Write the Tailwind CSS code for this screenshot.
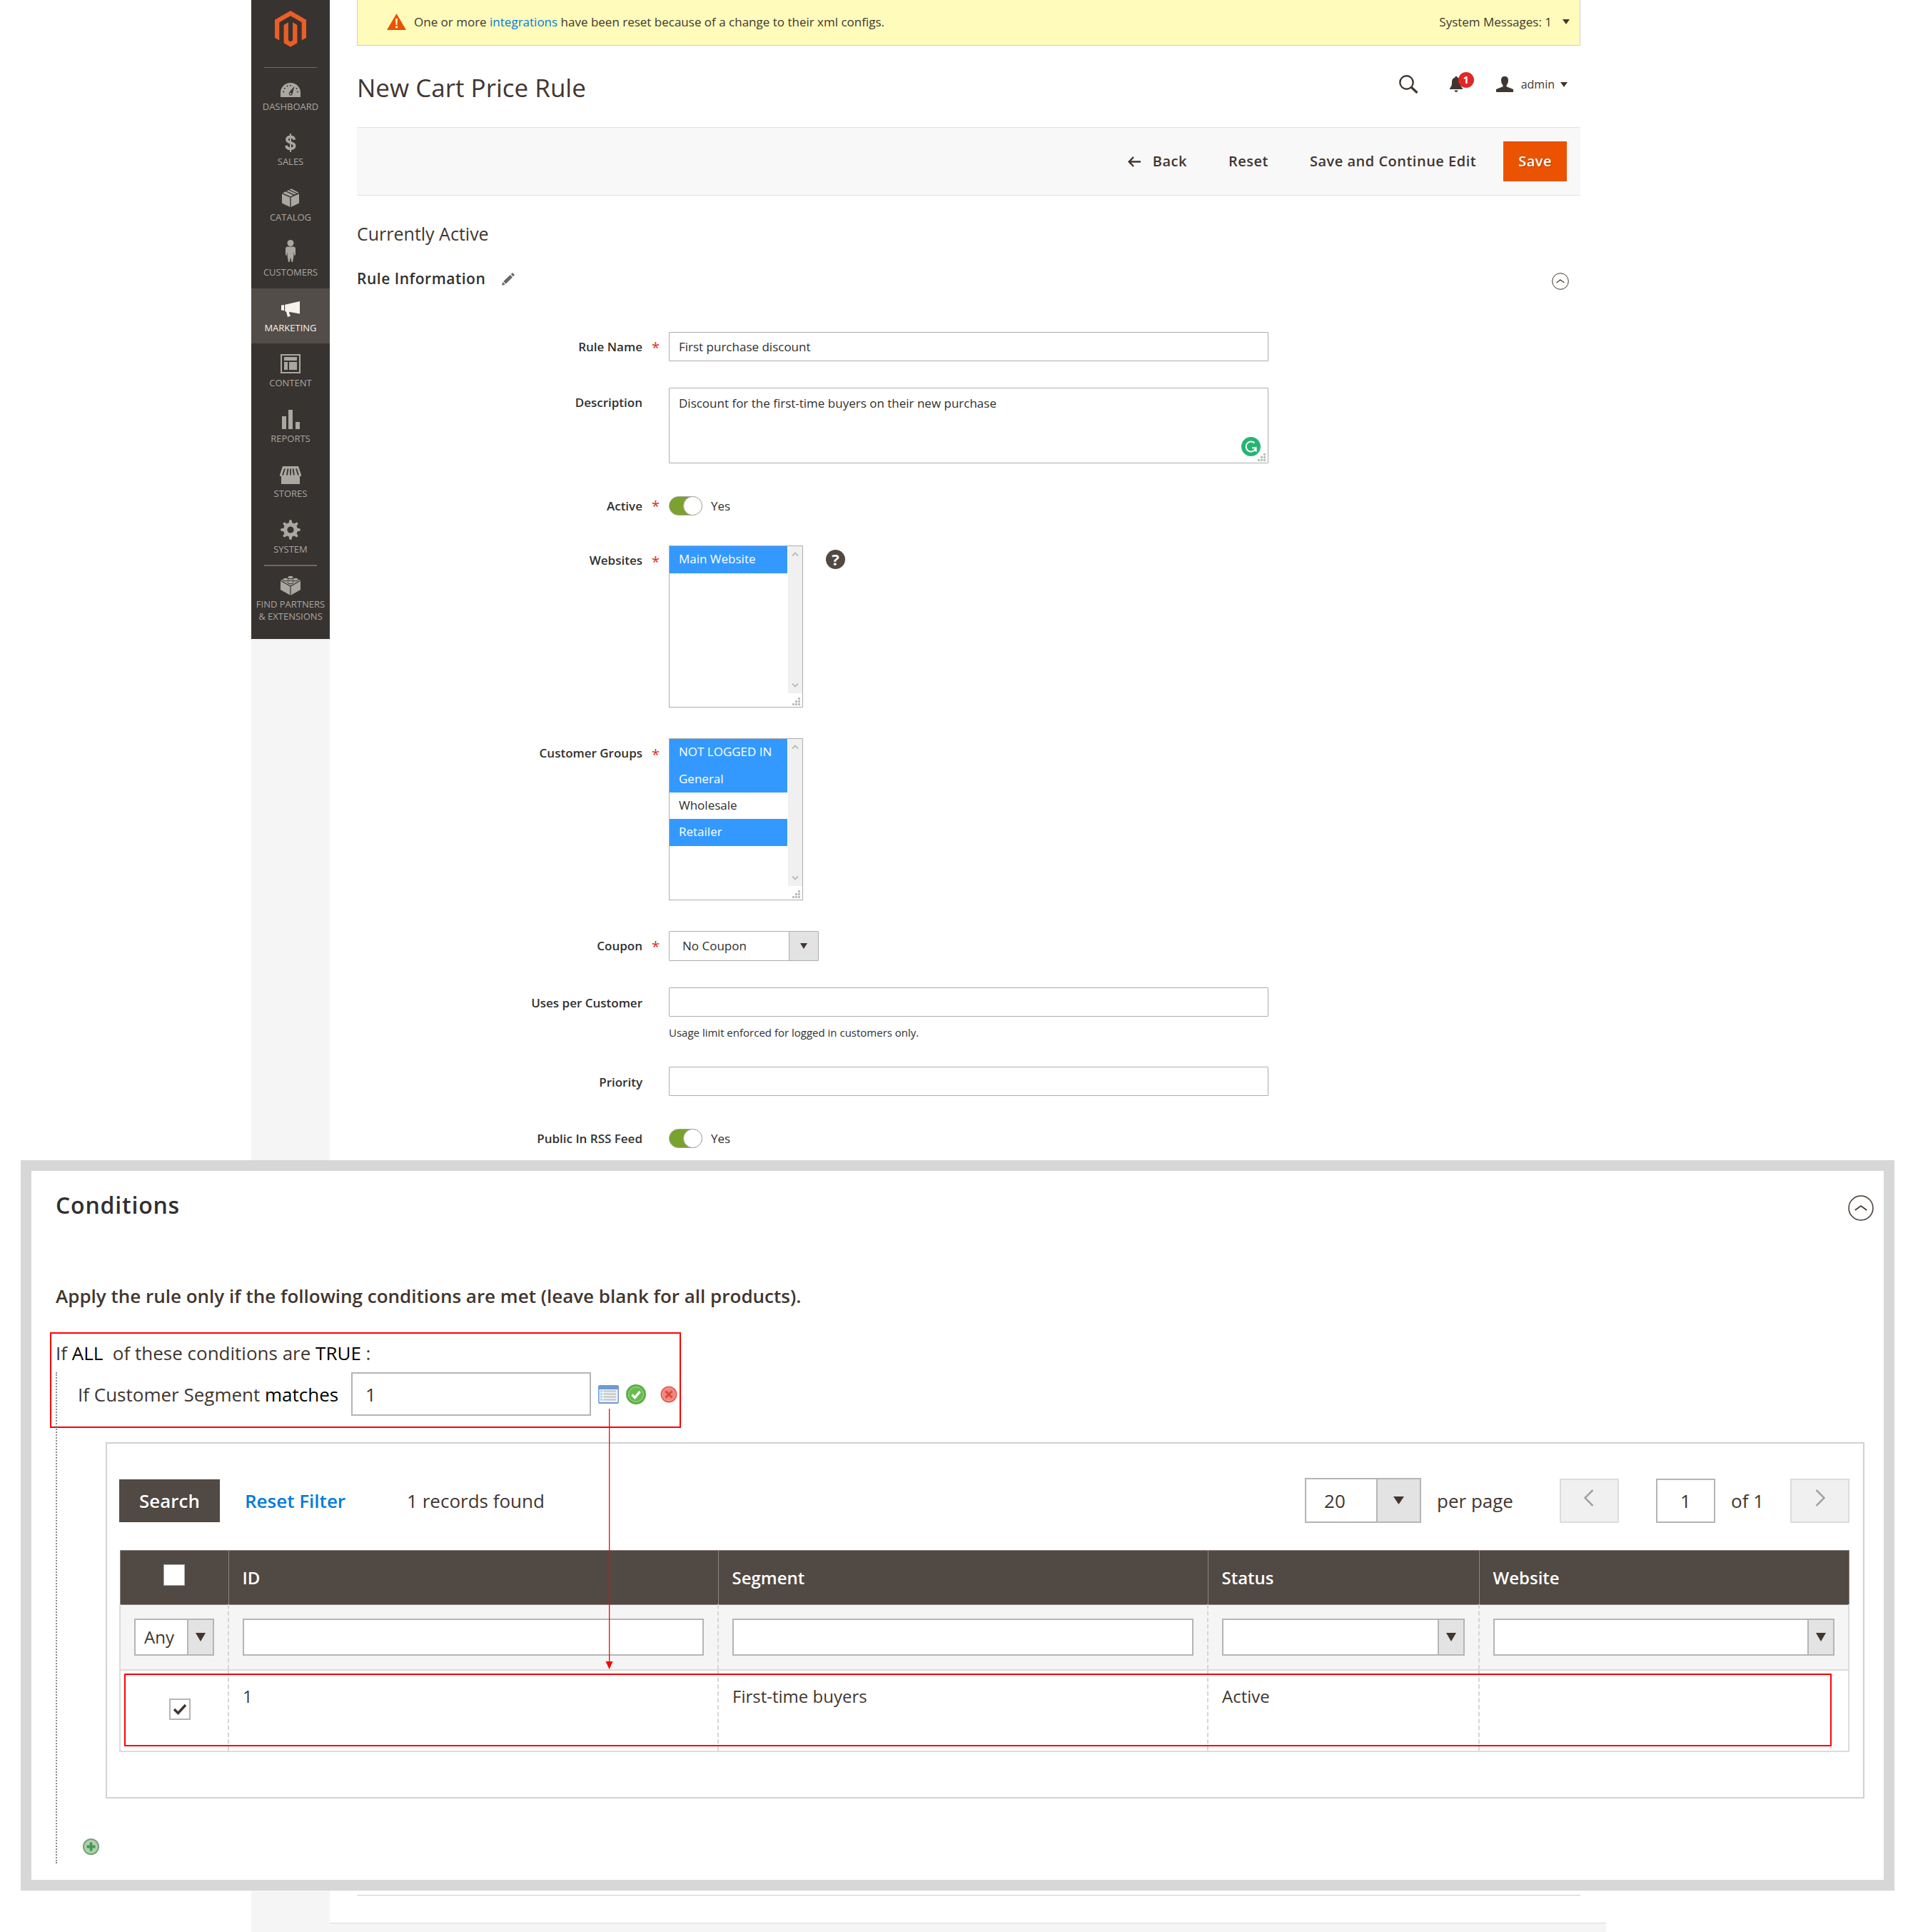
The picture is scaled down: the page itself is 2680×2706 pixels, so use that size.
<!DOCTYPE html>
<html lang="en">
<head>
<meta charset="utf-8">
<title>New Cart Price Rule</title>
<script src="https://cdn.jsdelivr.net/npm/@tailwindcss/browser@4"></script>
</head>
<body class="flex min-h-screen flex-col bg-white font-['Open_Sans',sans-serif] text-[17px] text-[#41362f]">

<svg class="hidden" aria-hidden="true">
  <symbol id="grip" viewBox="0 0 11 11"><path fill="#bdbdbd" d="M8 0h3v3H8zM4 4h3v3H4zM8 4h3v3H8zM0 8h3v3H0zM4 8h3v3H4zM8 8h3v3H8z"/></symbol>
  <symbol id="up" viewBox="0 0 10 8"><path d="M1 6.500 5 2.500l4 4" fill="none" stroke="#bdbdbd" stroke-width="2"/></symbol>
  <symbol id="down" viewBox="0 0 10 8"><path d="M1 1.500l4 4 4-4" fill="none" stroke="#bdbdbd" stroke-width="2"/></symbol>
  <symbol id="caret" viewBox="0 0 10 8" preserveAspectRatio="none"><path d="M0 0h10L5 8z" fill="#41362f"/></symbol>
  <symbol id="collapse" viewBox="0 0 24 24"><g fill="none" stroke="#41362f" stroke-width="1"><circle cx="12" cy="12" r="11.300"/><path d="M6.500 14 12 10l5.500 4" stroke-width="1.200"/></g></symbol>
</svg>

<div class="mr-[430px] ml-[352px] flex">
  <!-- Main navigation -->
  <aside class="w-[110px] shrink-0 bg-[#f5f5f5]">
    <nav class="flex h-[895px] flex-col bg-[#373330] text-[13px] leading-[17px] text-[#aaa6a0]">
      <a href="#" aria-label="Magento" class="flex h-[94px] justify-center pt-[15px]">
        <svg class="h-[51px] w-[44px]" viewBox="0 0 44 51" fill="#eb5e25"><path d="M22 0 44 12.700V38l-6.300 3.600V16.300L22 7.300l-15.700 9V41.600L0 38V12.700z"/><path d="M12.600 19.900 18.900 16.300V41.600L22 43.400l3.100-1.800V16.300l6.300 3.600v25.300L22 50.700l-9.400-5.500z"/></svg>
      </a>
      <div class="flex flex-1 flex-col">
        <a href="#" class="relative flex flex-1 flex-col items-center">
          <span class="absolute top-0 h-px w-[74px] bg-[#736963]"></span>
          <span class="flex h-[47px] items-center pt-4"><svg class="h-5 w-7" viewBox="0 0 28 20"><path d="M0 20v-6a14 14 0 0 1 28 0v6z" fill="currentColor"/><path d="M19.500 4.500 16.800 15a2.600 2.600 0 1 1-4.600-1.600z" fill="#373330"/><circle cx="14" cy="15.200" r="1.200" fill="#aaa6a0"/><g fill="#373330"><circle cx="14" cy="3.700" r="1"/><circle cx="9.500" cy="4.600" r="1"/><circle cx="5.800" cy="8" r="1"/><circle cx="4.200" cy="12.500" r="1"/><circle cx="22.500" cy="8" r="1"/><circle cx="23.800" cy="12.500" r="1"/></g></svg></span>DASHBOARD</a>
        <a href="#" class="flex flex-1 flex-col items-center">
          <span class="flex h-[47px] items-center pt-[10px]"><svg class="h-[26px] w-4" viewBox="0 0 16 26" fill="none" stroke="currentColor"><path d="M8 0v26" stroke-width="2"/><path d="M13.300 8.800C13 6 11 4.600 8 4.600S3 6 3 8.500c0 5.500 10.600 3 10.600 8.800 0 2.500-2.200 4.100-5.500 4.100-3.200 0-5.700-1.500-5.900-4.500" stroke-width="3.800"/></svg></span>SALES</a>
        <a href="#" class="flex flex-1 flex-col items-center">
          <span class="flex h-[47px] items-center pt-[10px]"><svg class="h-[26px] w-6" viewBox="0 0 24 26" fill="currentColor"><path d="M0 7.500 11.300 12.500V26L0 20.500zM24 7.500 12.700 12.500V26L24 20.500zM1 6.200 5 4.300 16 9.400l-4 1.800zM6.500 3.500 9 2.300l11 5-2.500 1.300zM10.500 1.500 13 .3l10.500 5.500-2 .9z"/></svg></span>CATALOG</a>
        <a href="#" class="flex flex-1 flex-col items-center">
          <span class="flex h-[47px] items-center pt-1"><svg class="h-[31px] w-[14px]" viewBox="0 0 14 31" fill="currentColor"><circle cx="7" cy="4.500" r="4.500"/><path d="M3 9.500h8q3 0 3 3v9h-1.500l-1-5V22L10 31H8.500L7 24.500 5.500 31H4L2.500 22v-5.500l-1 5H0v-9q0-3 3-3z"/></svg></span>CUSTOMERS</a>
        <a href="#" aria-current="page" class="flex flex-1 flex-col items-center bg-[#524d49] text-[#f7f3eb]">
          <span class="flex h-[47px] items-center pt-3"><svg class="h-[22px] w-[26px]" viewBox="0 0 26 22" fill="currentColor"><path d="M0 5.500 4 5v8l-4-.5zM5.200 4.800 26 0v17.500l-15-2.700.5 3 1.500 2.700-4 1.500L7 14.800l-1.800-1z"/></svg></span>MARKETING</a>
        <a href="#" class="flex flex-1 flex-col items-center">
          <span class="flex h-[47px] items-center pt-[10px]"><svg class="h-[27px] w-7" viewBox="0 0 28 27" fill="currentColor"><path d="M0 0h28v27H0zM2 2v23h24V2z" fill-rule="evenodd"/><path d="M5 4h18v5H5zM5 11h5v11H5zM12 11h11v11H12z"/></svg></span>CONTENT</a>
        <a href="#" class="flex flex-1 flex-col items-center">
          <span class="flex h-[47px] items-center pt-[10px]"><svg class="h-[27px] w-[25px]" viewBox="0 0 25 27" fill="currentColor"><path d="M0 9h6v18H0zM9 0h6v27H9zM19 17h6v10h-6z"/></svg></span>REPORTS</a>
        <a href="#" class="flex flex-1 flex-col items-center">
          <span class="flex h-[47px] items-center pt-3"><svg class="h-[25px] w-[30px]" viewBox="0 0 30 25"><path d="M4 0h22l4 12v2h-2v11H2V14H0v-2z" fill="currentColor"/><path d="M7 3.500 4 12.500M11.500 3.500 10 12.500M15 3.500v9M18.500 3.500l1.500 9M23 3.500l3 9" stroke="#373330" stroke-width="1.800"/></svg></span>STORES</a>
        <a href="#" class="flex flex-1 flex-col items-center">
          <span class="flex h-[47px] items-center pt-[10px]"><svg class="size-7" viewBox="0 0 28 28"><g fill="currentColor"><circle cx="14" cy="14" r="10"/><path id="t" d="M11.500 5 12.500.5q1.500-.8 3 0L16.500 5v18l-1 4.500q-1.500.8-3 0L11.500 23z"/><use href="#t" transform="rotate(45 14 14)"/><use href="#t" transform="rotate(90 14 14)"/><use href="#t" transform="rotate(135 14 14)"/></g><circle cx="14" cy="14" r="4.600" fill="#373330"/></svg></span>SYSTEM</a>
      </div>
      <a href="#" class="flex h-[104px] flex-col items-center text-center">
        <span class="h-[2px] w-[74px] bg-[#736963]"></span>
        <span class="flex h-[45px] items-center pt-2"><svg class="h-[29px] w-7" viewBox="0 0 28 29"><path d="M0 8 14 2l14 6v13l-14 8-14-8z" fill="currentColor"/><path d="M.5 8.500 14 16l13.500-7.500M14 16v13" fill="none" stroke="#373330" stroke-width="1.200"/><g fill="#aaa6a0" stroke="#373330" stroke-width="1"><ellipse cx="14" cy="3.500" rx="4" ry="2.300"/><ellipse cx="7" cy="6.500" rx="4" ry="2.300"/><ellipse cx="21" cy="6.500" rx="4" ry="2.300"/><ellipse cx="14" cy="10.500" rx="4" ry="2.300"/></g></svg></span>
        FIND PARTNERS<br>&amp; EXTENSIONS</a>
    </nav>
  </aside>

  <main class="mr-[36px] ml-[38px] flex-1">
    <div class="flex h-16 items-center border-x border-b border-[#cfcfcf] bg-[#fffbbb] pr-[14px] pb-[2px] pl-[41px]">
      <svg class="mr-[11px] h-[23px] w-[27px]" viewBox="0 0 27 23"><path d="M13.500 0 27 23H0z" fill="#eb5202"/><path d="M12 7h3l-.6 9h-1.800zM12 17.500h3v2.700h-3z" fill="#fffbbb"/></svg>
      <p>One or more <a href="#" class="text-[#007bdb]">integrations</a> have been reset because of a change to their xml configs.</p>
      <button class="ml-auto flex items-center gap-[15px]">System Messages: 1 <svg class="h-[7px] w-[10px]"><use href="#caret"/></svg></button>
    </div>

    <header class="flex h-[114px] items-center justify-between pr-[18px]">
      <h1 class="pt-1 text-[35px]">New Cart Price Rule</h1>
      <div class="flex items-center pb-[6px]">
        <button aria-label="Search" class="mr-[44px]"><svg class="h-[26px] w-[27px]" viewBox="0 0 27 26" fill="none" stroke="#41362f"><circle cx="10.500" cy="10.500" r="9.200" stroke-width="2.400"/><path d="m17 17 8.500 8" stroke-width="3.200"/></svg></button>
        <button aria-label="Notifications" class="relative mr-[47px]"><svg class="h-[22px] w-[18px]" viewBox="0 0 18 22" fill="#41362f"><path d="M7.500 0h3v1.500c3.500 1 4.500 3.500 4.500 7 0 4 .8 5.500 3 8.500v1H0v-1c2.200-3 3-4.500 3-8.500 0-3.500 1-6 4.500-7zM6.500 19.500h5q-.5 2.500-2.500 2.500t-2.500-2.500z"/></svg><span class="absolute -top-[6px] left-[12px] size-[22px] rounded-full bg-[#e22626] text-center text-[14px] leading-[22px] font-bold text-white">1</span></button>
        <button class="flex items-center text-[16px]"><svg class="mr-[11px] h-[22px] w-6" viewBox="0 0 24 22" fill="#41362f"><path d="M12 0c3.500 0 5 2 5 5.500 0 3-1 5-2.500 7v1.800L24 18v4H0v-4l9.500-3.700v-1.800C8 10.500 7 8.500 7 5.500 7 2 8.500 0 12 0z"/></svg>admin <svg class="ml-2 h-[7px] w-[10px]"><use href="#caret"/></svg></button>
      </div>
    </header>

    <div class="flex h-24 items-center justify-end border-y border-[#e3e3e3] bg-[#f8f8f8] pr-[19px] text-[20px] font-semibold tracking-wide">
      <button class="flex items-center"><svg class="mr-[17px] h-[15px] w-[18px]" viewBox="0 0 18 15" fill="none" stroke="#41362f" stroke-width="2.500"><path d="M8 1 1.800 7.500 8 14M2 7.500h16"/></svg>Back</button>
      <button class="ml-[58px]">Reset</button>
      <button class="ml-[58px]">Save and Continue Edit</button>
      <button class="ml-[38px] h-14 bg-[#eb5202] px-[21px] text-white [text-shadow:1px_1px_0_#0000004d]">Save</button>
    </div>

    <h2 class="mt-9 text-[25px] leading-[34px]">Currently Active</h2>
    <div class="mt-8 flex h-[30px] items-center pr-[16px] text-[#303030]">
      <h3 class="text-[21px] font-semibold tracking-wide">Rule Information</h3>
      <svg class="ml-[23px] size-[18px]" viewBox="0 0 18 18" fill="#666"><path d="m0 18 1.500-5L4.800 16.300zM2.300 12 11.800 3 15 6.200 5.700 15.500zM12.800 2 15 0l3 3-2 2.200z"/></svg>
      <button aria-label="Collapse" class="mt-[6px] ml-auto"><svg class="size-[24px]"><use href="#collapse"/></svg></button>
    </div>

    <form class="mt-[59px] text-[#303030]">
      <div class="flex">
        <label for="name" class="mr-[37px] w-[400px] text-right leading-[41px] font-semibold">Rule Name</label>
        <div class="relative w-[49%]"><span class="absolute -left-[24px] text-[20px] leading-[44px] text-[#e22626]">*</span>
          <input id="name" value="First purchase discount" class="block h-[41px] w-full rounded-[1px] border border-[#adadad] px-[13px]"></div>
      </div>
      <div class="mt-[37px] flex">
        <label for="desc" class="mr-[37px] w-[400px] text-right leading-[41px] font-semibold">Description</label>
        <div class="relative w-[49%]">
          <textarea id="desc" class="block h-[106px] w-full resize-none rounded-[1px] border border-[#adadad] px-[13px] py-[8px] leading-[25px]">Discount for the first-time buyers on their new purchase</textarea>
          <svg class="absolute right-[11px] bottom-[10px] size-[27px]" viewBox="0 0 27 27"><circle cx="13.500" cy="13.500" r="13.500" fill="#25b572"/><path d="M18.500 8.500A7 7 0 1 0 20.300 15.500M15 15.300h5.600v5.400" fill="none" stroke="#fff" stroke-width="2"/></svg>
          <svg class="absolute right-[4px] bottom-[3px] size-[11px]"><use href="#grip"/></svg>
        </div>
      </div>
      <div class="mt-[39px] flex">
        <label for="active" class="mr-[37px] w-[400px] text-right leading-[41px] font-semibold">Active</label>
        <div class="relative flex h-[41px] items-center"><span class="absolute -left-[24px] text-[20px] leading-[44px] text-[#e22626]">*</span>
          <input id="active" type="checkbox" role="switch" checked class="h-[27px] w-[47px] appearance-none rounded-full border border-[#aaa6a0] bg-[#79a22e]"><span class="pointer-events-none absolute left-5 size-[27px] rounded-full border border-[#aaa6a0] bg-white"></span>
          <span class="ml-3">Yes</span></div>
      </div>
      <div class="mt-[35px] flex items-start">
        <label for="sites" class="mr-[37px] w-[400px] text-right leading-[41px] font-semibold">Websites</label>
        <div class="relative flex h-[227px] w-[188px] border border-[#adadad]"><span class="absolute -left-[25px] text-[20px] leading-[44px] text-[#e22626]">*</span>
          <select id="sites" multiple class="h-full flex-1 appearance-none overflow-hidden">
            <option selected class="h-[38px] px-[13px] pt-[6px] pb-0 checked:bg-[linear-gradient(#3399ff,#3399ff)] checked:[-webkit-text-fill-color:white]">Main Website</option>
          </select>
          <span class="ml-px flex h-[206px] w-5 flex-col items-center justify-between bg-[#f0f0f0] py-[7px]"><svg class="h-2 w-[10px]"><use href="#up"/></svg><svg class="h-2 w-[10px]"><use href="#down"/></svg></span>
          <svg class="absolute right-[3px] bottom-[2px] size-[11px]"><use href="#grip"/></svg>
        </div>
        <button type="button" aria-label="Help" class="mt-[6px] ml-8 size-[27px] rounded-full bg-[#514943] text-center text-[22px] leading-[27px] font-bold text-white">?</button>
      </div>
      <div class="mt-[43px] flex items-start">
        <label for="groups" class="mr-[37px] w-[400px] text-right leading-[41px] font-semibold">Customer Groups</label>
        <div class="relative flex h-[227px] w-[188px] border border-[#adadad]"><span class="absolute -left-[25px] text-[20px] leading-[44px] text-[#e22626]">*</span>
          <select id="groups" multiple class="h-full flex-1 appearance-none overflow-hidden">
            <option selected class="h-[38px] px-[13px] pt-[6px] pb-0 checked:bg-[linear-gradient(#3399ff,#3399ff)] checked:[-webkit-text-fill-color:white]">NOT LOGGED IN</option>
            <option selected class="h-[37px] px-[13px] pt-[6px] pb-0 checked:bg-[linear-gradient(#3399ff,#3399ff)] checked:[-webkit-text-fill-color:white]">General</option>
            <option class="h-[37px] px-[13px] pt-[6px] pb-0">Wholesale</option>
            <option selected class="h-[38px] px-[13px] pt-[6px] pb-0 checked:bg-[linear-gradient(#3399ff,#3399ff)] checked:[-webkit-text-fill-color:white]">Retailer</option>
          </select>
          <span class="ml-px flex h-[206px] w-5 flex-col items-center justify-between bg-[#f0f0f0] py-[7px]"><svg class="h-2 w-[10px]"><use href="#up"/></svg><svg class="h-2 w-[10px]"><use href="#down"/></svg></span>
          <svg class="absolute right-[3px] bottom-[2px] size-[11px]"><use href="#grip"/></svg>
        </div>
      </div>
      <div class="mt-[43px] flex">
        <label for="coupon" class="mr-[37px] w-[400px] text-right leading-[41px] font-semibold">Coupon</label>
        <div class="relative w-[210px]"><span class="absolute -left-[24px] text-[20px] leading-[44px] text-[#e22626]">*</span>
          <select id="coupon" class="block h-[42px] w-full appearance-none rounded-[1px] border border-[#adadad] bg-white pl-[18px]"><option>No Coupon</option></select>
          <span class="pointer-events-none absolute top-px right-px flex h-10 w-[41px] items-center justify-center border-l border-[#adadad] bg-[#e3e3e3]"><svg class="h-2 w-[10px]"><use href="#caret"/></svg></span></div>
      </div>
      <div class="mt-[37px] flex">
        <label for="uses" class="mr-[37px] w-[400px] text-right leading-[43px] font-semibold">Uses per Customer</label>
        <div class="w-[49%]">
          <input id="uses" class="block h-[41px] w-full rounded-[1px] border border-[#adadad] px-[13px]">
          <p class="pt-3 text-[15px] leading-5">Usage limit enforced for logged in customers only.</p></div>
      </div>
      <div class="mt-[38px] flex">
        <label for="priority" class="mr-[37px] w-[400px] text-right leading-[43px] font-semibold">Priority</label>
        <div class="w-[49%]"><input id="priority" class="block h-[41px] w-full rounded-[1px] border border-[#adadad] px-[13px]"></div>
      </div>
      <div class="mt-[37px] flex pb-[10px]">
        <label for="rss" class="mr-[37px] w-[400px] text-right leading-[41px] font-semibold">Public In RSS Feed</label>
        <div class="relative flex h-[41px] items-center">
          <input id="rss" type="checkbox" role="switch" checked class="h-[27px] w-[47px] appearance-none rounded-full border border-[#aaa6a0] bg-[#79a22e]"><span class="pointer-events-none absolute left-5 size-[27px] rounded-full border border-[#aaa6a0] bg-white"></span>
          <span class="ml-3">Yes</span></div>
      </div>
    </form>
  </main>
</div>

<!-- Conditions panel -->
<section class="mr-[26px] ml-[29px] border-[15px] border-[#d7d7d7] bg-white pb-[35px] text-[26px] leading-9">
  <div class="flex items-center justify-between pt-[26px] pr-[14px] pl-[34px] text-[#303030]">
    <h2 class="text-[32px] leading-10 font-semibold tracking-wide">Conditions</h2>
    <button aria-label="Collapse" class="mt-2"><svg class="size-9"><use href="#collapse"/></svg></button>
  </div>
  <p class="mt-[87px] pl-[34px] font-semibold">Apply the rule only if the following conditions are met (leave blank for all products).</p>

  <div class="relative mt-[33px] ml-[26px] h-[134px] w-[884px] border-2 border-[#ff0000] pt-[9px] pl-[6px]">
    <p>If <a href="#" class="text-black">ALL</a> &nbsp;of these conditions are <a href="#" class="text-black">TRUE</a> :</p>
    <div class="mt-[9px] flex items-center pl-[31px]">
      <label for="segment" class="w-[368px] shrink-0 whitespace-nowrap">If Customer Segment <span class="text-black">matches</span></label>
      <input id="segment" value="1" class="ml-[15px] h-[61px] w-[336px] shrink-0 border-2 border-[#b5b5b5] px-[18px]">
      <button aria-label="Open chooser" class="ml-[10px] shrink-0"><svg class="h-[26px] w-[29px]" viewBox="0 0 29 26"><rect width="29" height="26" rx="2" fill="#6f9ad3"/><path d="M1.500 6h26v18h-26z" fill="#eef3f8"/><path d="M3 8.500h3M3 12.500h3M3 16.500h3M3 20.500h3" stroke="#8ecdf5" stroke-width="2"/><path d="M7.500 8.500H25M7.500 12.500H25M7.500 16.500H25M7.500 20.500H25" stroke="#c2c2c2" stroke-width="2.200"/></svg></button>
      <button aria-label="Apply" class="ml-[10px] shrink-0"><svg class="size-[28px]" viewBox="0 0 28 28"><circle cx="14" cy="14" r="14" fill="#5cae47"/><circle cx="14" cy="14" r="10.500" fill="#6aba50" stroke="#a8dc98"/><path d="m8.500 14.500 4 4 7-8.500" fill="none" stroke="#fff" stroke-width="3.500"/></svg></button>
      <button aria-label="Remove" class="ml-[20px] shrink-0"><svg class="size-[24px]" viewBox="0 0 24 24"><circle cx="12" cy="12" r="11.500" fill="#ea5f55"/><circle cx="12" cy="12" r="9" fill="#f0857c" stroke="#f7aaa2"/><path d="m7.500 7.500 9 9M16.500 7.500l-9 9" stroke="#d8443a" stroke-width="2.600"/></svg></button>
    </div>
    <!-- arrow from the chooser icon to the chosen row -->
    <svg class="absolute top-[105px] left-[776px] z-10 h-[365px] w-[11px]" viewBox="0 0 11 365" fill="#f00"><path d="M5 0h1.300v356H5zM.500 354h10L5.600 365z"/></svg>
    <span class="absolute top-[54px] left-[6px] h-[688px] border-l-2 border-dotted border-[#8a8a8a]"></span>
  </div>

  <div class="mt-[20px] mr-[27px] ml-[104px] border-2 border-[#d2d2d2] pt-[48px] pr-[19px] pb-[63px] pl-[17px]">
    <div class="flex items-center">
      <button class="h-[60px] w-[141px] bg-[#514943] font-semibold text-white [text-shadow:1px_1px_0_#0000004d]">Search</button>
      <button class="ml-[35px] font-semibold text-[#007bdb]">Reset Filter</button>
      <span class="ml-[86px]">1 records found</span>
      <div class="relative ml-auto w-[163px]">
        <select id="per" class="block h-[63px] w-full appearance-none border-2 border-[#b5b5b5] bg-white pl-[25px]"><option>20</option></select>
        <span class="pointer-events-none absolute top-[2px] right-[2px] flex h-[59px] w-[61px] items-center justify-center border-l-2 border-[#b5b5b5] bg-[#e3e3e3]"><svg class="h-[11px] w-[15px]"><use href="#caret"/></svg></span>
      </div>
      <label for="per" class="ml-[22px]">per page</label>
      <button aria-label="Previous page" disabled class="ml-[65px] flex h-[62px] w-[83px] items-center justify-center border-2 border-[#dcdcdc] bg-[#f0f0f0] pb-2"><svg class="h-[24px] w-[14px]" viewBox="0 0 14 24" fill="none" stroke="#a6a29e" stroke-width="2.500"><path d="M12.500 1 1.500 12l11 11"/></svg></button>
      <input aria-label="Page" value="1" class="ml-[52px] h-[62px] w-[83px] border-2 border-[#b5b5b5] text-center">
      <span class="ml-[22px]">of 1</span>
      <button aria-label="Next page" disabled class="ml-[37px] flex h-[62px] w-[83px] items-center justify-center border-2 border-[#dcdcdc] bg-[#f0f0f0] pb-2"><svg class="h-[24px] w-[14px]" viewBox="0 0 14 24" fill="none" stroke="#a6a29e" stroke-width="2.500"><path d="m1.500 1 11 11-11 11"/></svg></button>
    </div>

    <div class="relative mt-[38px]">
      <table class="w-full table-fixed border-collapse text-[24px] leading-8">
        <colgroup><col class="w-[152px]"><col><col><col class="w-[380px]"><col class="w-[518px]"></colgroup>
        <thead>
          <tr class="h-[76px] bg-[#514943] text-left text-white [&>th]:border [&>th]:border-[#8a837f] [&>th]:font-semibold">
            <th class="align-middle"><input type="checkbox" aria-label="Select all" class="mx-auto -mt-2 block size-[30px] appearance-none border border-[#adadad] bg-white"></th>
            <th class="pl-[19px]">ID</th><th class="pl-[19px]">Segment</th><th class="pl-[19px]">Status</th><th class="pl-[19px]">Website</th>
          </tr>
          <tr class="h-[91px] border-x-2 border-b-2 border-[#dcdcdc] bg-[#f5f5f5] [&>td+td]:border-l-2 [&>td+td]:border-dashed [&>td+td]:border-l-[#d6d6d6] [&>td]:px-[19px]">
            <td><div class="relative"><select aria-label="Any" class="block h-[52px] w-full appearance-none border-2 border-[#b5b5b5] bg-white pl-[12px]"><option>Any</option></select><span class="pointer-events-none absolute top-[2px] right-[2px] flex h-12 w-[36px] items-center justify-center border-l-2 border-[#b5b5b5] bg-[#e3e3e3]"><svg class="h-[12px] w-[14px]"><use href="#caret"/></svg></span></div></td>
            <td><input aria-label="ID" class="block h-[52px] w-full border-2 border-[#b5b5b5] bg-white px-3"></td>
            <td><input aria-label="Segment" class="block h-[52px] w-full border-2 border-[#b5b5b5] bg-white px-3"></td>
            <td><div class="relative"><select aria-label="Status" class="block h-[52px] w-full appearance-none border-2 border-[#b5b5b5] bg-white"><option></option></select><span class="pointer-events-none absolute top-[2px] right-[2px] flex h-12 w-[36px] items-center justify-center border-l-2 border-[#b5b5b5] bg-[#e3e3e3]"><svg class="h-[12px] w-[14px]"><use href="#caret"/></svg></span></div></td>
            <td><div class="relative"><select aria-label="Website" class="block h-[52px] w-full appearance-none border-2 border-[#b5b5b5] bg-white"><option></option></select><span class="pointer-events-none absolute top-[2px] right-[2px] flex h-12 w-[36px] items-center justify-center border-l-2 border-[#b5b5b5] bg-[#e3e3e3]"><svg class="h-[12px] w-[14px]"><use href="#caret"/></svg></span></div></td>
          </tr>
        </thead>
        <tbody>
          <tr class="h-[114px] border-x-2 border-b-2 border-[#dcdcdc] align-top [&>td+td]:border-l-2 [&>td+td]:border-dashed [&>td+td]:border-l-[#d6d6d6] [&>td+td]:pt-5 [&>td+td]:pl-[19px]">
            <td class="pt-[39px] pl-4"><span class="relative mx-auto block size-[30px]"><input type="checkbox" checked aria-label="Select First-time buyers" class="block size-full appearance-none border-2 border-[#b5b5b5] bg-white"><svg class="pointer-events-none absolute inset-[6px] size-[18px]" viewBox="0 0 18 18" fill="none" stroke="#41362f" stroke-width="3.500"><path d="m1 9 5.500 5.500L17 3"/></svg></span></td>
            <td>1</td><td>First-time buyers</td><td>Active</td><td></td>
          </tr>
        </tbody>
      </table>
      <!-- outline round the chosen row -->
      <div class="pointer-events-none absolute right-[25px] bottom-[8px] left-[7px] h-[102px] border-2 border-[#ff0000]"></div>
    </div>
  </div>

  <button aria-label="Add condition" class="mt-[56px] ml-[72px] block"><svg class="size-[23px]" viewBox="0 0 23 23"><circle cx="11.500" cy="11.500" r="10.500" fill="#b5cfa8" stroke="#76a27f" stroke-width="2"/><path d="M11.500 5.500v12M5.500 11.500h12" stroke="#3f9a5c" stroke-width="3.800"/></svg></button>
</section>

<div class="mr-[430px] ml-[352px] flex flex-1 bg-[#f5f5f5]">
  <div class="ml-[110px] h-[46px] flex-1 border-b border-[#dcdcdc] bg-white pt-[6px] pr-9 pl-[38px]"><hr class="border-[#cccccc]"></div>
</div>
</body>
</html>
